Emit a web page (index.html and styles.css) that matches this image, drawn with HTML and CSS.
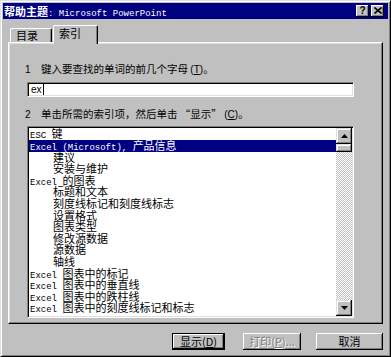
FILE: index.html
```html
<!DOCTYPE html>
<html>
<head>
<meta charset="utf-8">
<link rel="stylesheet" href="styles.css">
</head>
<body>
<div class="window">
  <div class="titlebar">
    <span class="title"><span class="tc">帮助主题</span><span class="tm">: Microsoft PowerPoint</span></span>
    <span class="tbtn help">?</span>
    <span class="tbtn close"><svg width="8" height="7" viewBox="0 0 8 7"><path d="M0.5 0.5 L7.5 6.5 M7.5 0.5 L0.5 6.5" stroke="#000" stroke-width="1.6" fill="none"/></svg></span>
  </div>
  <div class="tabs">
    <div class="tab">目录</div>
    <div class="tab active">索引</div>
  </div>
  <div class="panel">
    <div class="label"><span class="num">1</span>键入要查找的单词的前几个字母 <span class="lat">(<u>T</u>)</span>。</div>
    <div class="input"><span class="val">ex</span><span class="caret"></span></div>
    <div class="label label2"><span class="num">2</span>单击所需的索引项，然后单击 “显示” <span class="lat">(<u>C</u>)</span>。</div>
    <div class="listbox">
      <div class="items">
        <div class="row"><span class="m">ESC </span>键</div>
        <div class="row sel"><span class="m">Excel (Microsoft), </span>产品信息</div>
        <div class="row sub">建议</div>
        <div class="row sub">安装与维护</div>
        <div class="row"><span class="m">Excel </span>的图表</div>
        <div class="row sub">标题和文本</div>
        <div class="row sub">刻度线标记和刻度线标志</div>
        <div class="row sub">设置格式</div>
        <div class="row sub">图表类型</div>
        <div class="row sub">修改源数据</div>
        <div class="row sub">源数据</div>
        <div class="row sub">轴线</div>
        <div class="row"><span class="m">Excel </span>图表中的标记</div>
        <div class="row"><span class="m">Excel </span>图表中的垂直线</div>
        <div class="row"><span class="m">Excel </span>图表中的跌柱线</div>
        <div class="row"><span class="m">Excel </span>图表中的刻度线标记和标志</div>
      </div>
      <div class="scrollbar">
        <div class="sbtn"><svg width="7" height="4" viewBox="0 0 7 4"><polygon points="3.5,0 7,4 0,4" fill="#000"/></svg></div>
        <div class="thumb"></div>
        <div class="track"></div>
        <div class="sbtn"><svg width="7" height="4" viewBox="0 0 7 4"><polygon points="0,0 7,0 3.5,4" fill="#000"/></svg></div>
      </div>
    </div>
  </div>
  <div class="buttons">
    <div class="btn default b1">显示(<u>D</u>)</div>
    <div class="btn disabled b2">打印(<u>P</u>)...</div>
    <div class="btn b3">取消</div>
  </div>
</div>
</body>
</html>
```
FILE: styles.css
```css
* { box-sizing: border-box; }
html, body { margin: 0; padding: 0; background: #c0c0c0; }

.window {
  width: 391px;
  height: 357px;
  background: #c0c0c0;
  border: 1px solid;
  border-color: #dfdfdf #000 #000 #dfdfdf;
  box-shadow: inset 1px 1px #fff, inset -1px -1px #808080;
  padding: 2px;
  display: flex;
  flex-direction: column;
  font-family: "Noto Sans CJK SC", sans-serif;
  color: #000;
}

.titlebar {
  flex: none;
  height: 16px;
  background: #000080;
  color: #fff;
  display: flex;
  align-items: center;
  padding: 0 4px 0 1px;
}
.title { flex: 1; white-space: nowrap; line-height: 16px; }
.tc { font-size: 11px; font-weight: bold; }
.tm { font-family: "Liberation Mono", monospace; font-size: 9px; }

.tbtn {
  width: 13px;
  height: 12px;
  background: #c0c0c0;
  box-shadow: inset -1px -1px #000, inset 1px 1px #fff, inset -2px -2px #808080;
  display: flex;
  align-items: center;
  justify-content: center;
  color: #000;
}
.help {
  font-family: "Liberation Sans", sans-serif;
  font-weight: bold;
  font-size: 10px;
  line-height: 10px;
  margin-right: 2px;
  padding-bottom: 1px;
}
.close { padding-bottom: 1px; }

.tabs {
  flex: none;
  height: 25px;
  margin-bottom: -2px;
  display: flex;
  align-items: flex-end;
  padding-left: 7px;
}
.tab {
  width: 42px;
  height: 14px;
  margin-bottom: 2px;
  background: #c0c0c0;
  border-top: 1px solid #fff;
  border-left: 1px solid #fff;
  border-right: 1px solid #000;
  box-shadow: inset -1px 0 #808080;
  border-top-left-radius: 2px;
  border-top-right-radius: 2px;
  font-size: 11px;
  line-height: 13px;
  padding-left: 5px;
  white-space: nowrap;
}
.tab.active {
  position: relative;
  z-index: 1;
  width: 45px;
  height: 19px;
  margin-bottom: 0;
  margin-left: 1px;
  line-height: 15px;
}

.panel {
  flex: none;
  height: 282px;
  margin: 0 5px;
  border: 1px solid;
  border-color: #fff #000 #000 #fff;
  box-shadow: inset -1px -1px #808080, inset 1px 1px #dfdfdf;
  padding: 20px 0 0 16px;
}

.label {
  height: 12px;
  line-height: 12px;
  font-size: 10.5px;
  white-space: nowrap;
}
.label2 { margin-top: 11px; }
.num {
  display: inline-block;
  width: 16px;
  font-family: "Liberation Sans", sans-serif;
  font-size: 10px;
}
.lat { font-family: "Liberation Sans", sans-serif; font-size: 10px; }

.input {
  margin: 7px 0 0 2px;
  width: 327px;
  height: 15px;
  background: #fff;
  border: 1px solid;
  border-color: #808080 #fff #fff #808080;
  box-shadow: inset 1px 1px #000, inset -1px -1px #dfdfdf;
  padding-left: 3px;
  display: flex;
  align-items: center;
}
.val { font-family: "Liberation Sans", sans-serif; font-size: 10px; line-height: 12px; }
.caret { width: 1px; height: 11px; background: #000; margin-left: 1px; }

.listbox {
  margin: 6px 0 0 2px;
  width: 327px;
  height: 192px;
  background: #fff;
  border: 1px solid;
  border-color: #808080 #fff #fff #808080;
  box-shadow: inset 1px 1px #000, inset -1px -1px #dfdfdf;
  padding: 1px;
  display: flex;
}
.items {
  flex: 1;
  font-size: 11px;
  line-height: 11.6px;
  padding-top: 0.4px;
}
.row {
  height: 11.6px;
  padding-left: 1px;
  white-space: nowrap;
}
.row.sub { padding-left: 24px; }
.row.sel { background: #000080; color: #fff; }
.m { font-family: "Liberation Mono", monospace; font-size: 9px; }

.scrollbar {
  width: 16px;
  display: flex;
  flex-direction: column;
}
.sbtn, .thumb {
  flex: none;
  background: #c0c0c0;
  box-shadow: inset -1px -1px #000, inset 1px 1px #dfdfdf, inset -2px -2px #808080, inset 2px 2px #fff;
}
.sbtn {
  height: 16px;
  display: flex;
  align-items: center;
  justify-content: center;
}
.thumb { height: 8px; }
.track {
  flex: 1;
  background: repeating-conic-gradient(#c0c0c0 0 25%, #ffffff 0 50%) 0 0 / 2px 2px;
}

.buttons {
  flex: none;
  margin-top: 9px;
  height: 17px;
  display: flex;
  justify-content: flex-end;
  padding-right: 5px;
}
.btn {
  height: 17px;
  background: #c0c0c0;
  box-shadow: inset -1px -1px #000, inset 1px 1px #fff, inset -2px -2px #808080;
  font-size: 11px;
  line-height: 17px;
  text-align: center;
  white-space: nowrap;
}
.btn.default {
  border: 1px solid #000;
  line-height: 15px;
}
.b1 { width: 53px; }
.b2 { width: 58px; margin-left: 18px; }
.b3 { width: 67px; margin-left: 15px; }
.btn.disabled { color: #808080; text-shadow: 1px 1px #fff; }
```
